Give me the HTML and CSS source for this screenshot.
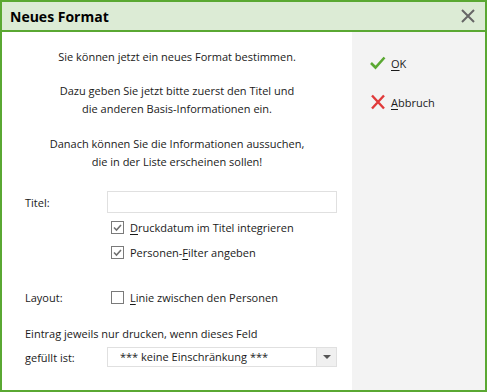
FILE: index.html
```html
<!DOCTYPE html>
<html lang="de">
<head>
    <meta charset="UTF-8">
    <title>Neues Format</title>
    <link rel="stylesheet" href="styles.css">
</head>
<body>
    <div class="window">
        <div class="titlebar">
            <div class="title">Neues Format</div>
            <svg class="close" width="16" height="16" viewBox="0 0 16 16">
                <path d="M2 2 L14 14 M14 2 L2 14" stroke="#666" stroke-width="2" fill="none"/>
            </svg>
        </div>
        <div class="content">
            <div class="main">
                <p>Sie können jetzt ein neues Format bestimmen.</p>
                <p class="second">Dazu geben Sie jetzt bitte zuerst den Titel und<br>die anderen Basis-Informationen ein.</p>
                <p>Danach können Sie die Informationen aussuchen,<br>die in der Liste erscheinen sollen!</p>

                <div class="row first">
                    <div class="label">Titel:</div>
                    <div class="input"></div>
                </div>
                <div class="row check-row">
                    <div class="label"></div>
                    <svg class="box" width="13" height="13" viewBox="0 0 13 13">
                        <rect x="0.5" y="0.5" width="12" height="12" fill="#fff" stroke="#7a7a7a"/>
                        <path d="M3 6.5 L5.5 9 L10 4" stroke="#707070" stroke-width="1.6" fill="none"/>
                    </svg>
                    <span><u>D</u>ruckdatum im Titel integrieren</span>
                </div>
                <div class="row check-row">
                    <div class="label"></div>
                    <svg class="box" width="13" height="13" viewBox="0 0 13 13">
                        <rect x="0.5" y="0.5" width="12" height="12" fill="#fff" stroke="#7a7a7a"/>
                        <path d="M3 6.5 L5.5 9 L10 4" stroke="#707070" stroke-width="1.6" fill="none"/>
                    </svg>
                    <span>Personen-<u>F</u>ilter angeben</span>
                </div>
                <div class="row layout-row">
                    <div class="label">Layout:</div>
                    <svg class="box" width="13" height="13" viewBox="0 0 13 13">
                        <rect x="0.5" y="0.5" width="12" height="12" fill="#fff" stroke="#7a7a7a"/>
                    </svg>
                    <span><u>L</u>inie zwischen den Personen</span>
                </div>
                <div class="note">Eintrag jeweils nur drucken, wenn dieses Feld</div>
                <div class="row filter-row">
                    <div class="label">gefüllt ist:</div>
                    <div class="select">
                        <div class="value">*** keine Einschränkung ***</div>
                        <div class="arrow"></div>
                    </div>
                </div>
            </div>
            <div class="side">
                <div class="action">
                    <svg width="16" height="14" viewBox="0 0 16 14">
                        <path d="M1 7 L5.5 11.5 L14.5 1.5" stroke="#5aa832" stroke-width="2.6" fill="none"/>
                    </svg>
                    <span><u>O</u>K</span>
                </div>
                <div class="action">
                    <svg width="16" height="16" viewBox="0 0 16 16">
                        <path d="M2 1.5 L14 14.5 M14 1.5 L2 14.5" stroke="#e03a3a" stroke-width="2.4" fill="none"/>
                    </svg>
                    <span><u>A</u>bbruch</span>
                </div>
            </div>
        </div>
    </div>
</body>
</html>
```

FILE: styles.css
```css
body {
    margin: 0;
    font-family: "Open Sans", Arial, sans-serif;
    font-size: 11px;
    color: #1a1a1a;
}
u {
    text-decoration: underline;
    text-underline-offset: 2px;
}
.window {
    width: 487px;
    height: 392px;
    box-sizing: border-box;
    border: 2px solid #5aa832;
    display: flex;
    flex-direction: column;
}
.titlebar {
    height: 28px;
    background-color: #dcebd5;
    border-bottom: 2px solid #5aa832;
    display: flex;
    align-items: center;
    justify-content: space-between;
    padding: 0 9px 0 8px;
}
.title {
    font-size: 14px;
    font-weight: bold;
    color: #000;
}
.content {
    flex: 1;
    display: flex;
}
.main {
    width: 350px;
    padding: 16px 0 0 23px;
    box-sizing: border-box;
}
.main p {
    margin: 0 23px 16px 0;
    text-align: center;
    line-height: 18px;
}
.main p.second {
    margin-bottom: 17px;
}
.row {
    display: flex;
    align-items: center;
    height: 22px;
}
.row.first {
    margin-top: 20px;
}
.row.check-row {
    margin-top: 3px;
}
.row.layout-row {
    margin-top: 23px;
}
.label {
    width: 82px;
    flex-shrink: 0;
}
.input {
    width: 230px;
    height: 22px;
    box-sizing: border-box;
    border: 1px solid #e0e0e0;
    background: #fff;
}
.box {
    margin: 0 6px 0 4px;
}
.note {
    margin-top: 17px;
    line-height: 18px;
}
.row.filter-row {
    margin-top: 4px;
    height: 20px;
}
.select {
    width: 230px;
    height: 20px;
    box-sizing: border-box;
    border: 1px solid #e0e0e0;
    display: flex;
}
.select .value {
    flex: 1;
    padding-left: 12px;
    line-height: 18px;
}
.select .arrow {
    width: 19px;
    background: #f0f0f0;
    border-left: 1px solid #e0e0e0;
    position: relative;
}
.select .arrow::after {
    content: "";
    position: absolute;
    left: 6px;
    top: 7px;
    border-left: 4px solid transparent;
    border-right: 4px solid transparent;
    border-top: 4px solid #555;
}
.side {
    flex: 1;
    background-color: #f3f3f3;
    padding: 21px 0 0 18px;
}
.action {
    display: flex;
    align-items: center;
    height: 20px;
    margin-bottom: 19px;
    gap: 5px;
}
```
